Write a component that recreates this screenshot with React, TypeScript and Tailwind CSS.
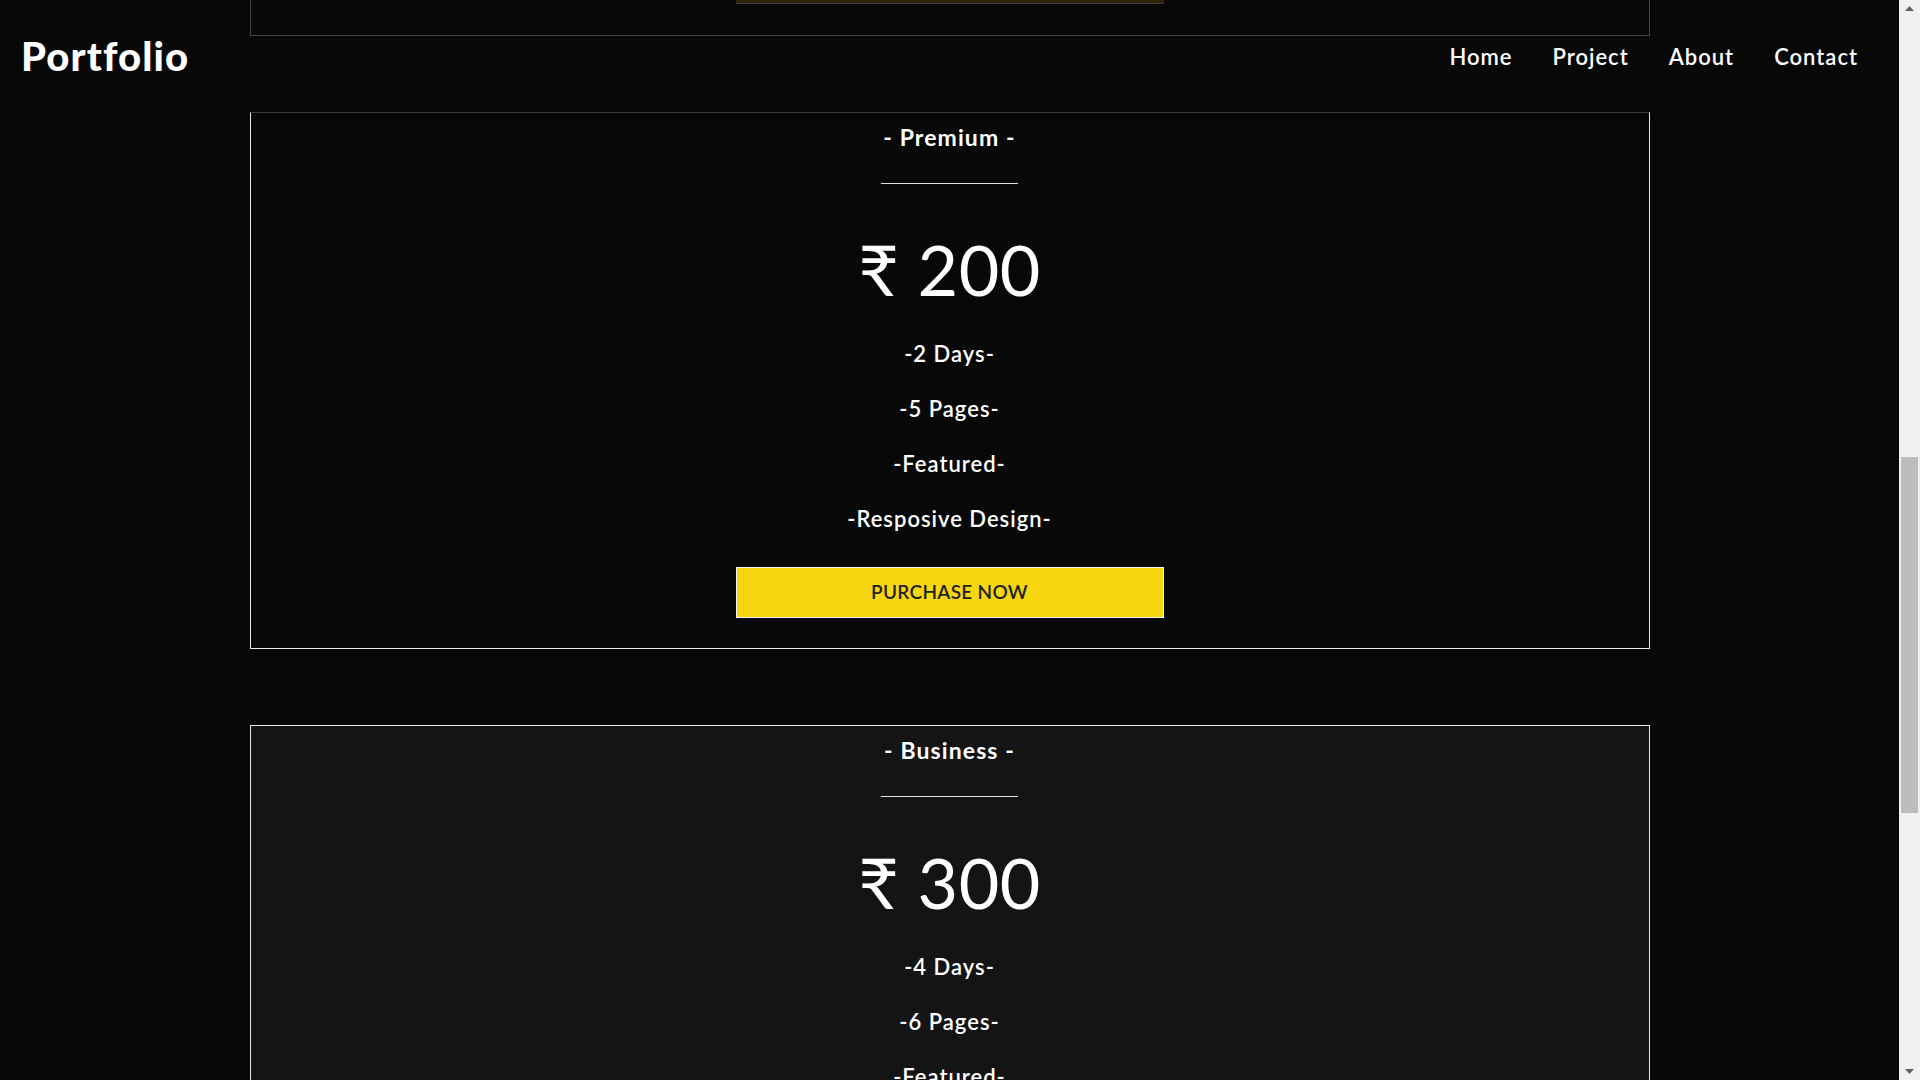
import React from "react";

type Plan = {
  name: string;
  price: string;
  items: string[];
  bg: string;
  topBorder: string;
};

const plans: Plan[] = [
  {
    name: "Premium",
    price: "200",
    items: ["-2 Days-", "-5 Pages-", "-Featured-", "-Resposive Design-"],
    bg: "bg-[#080808]",
    topBorder: "border-t-[#3a3a3a]",
  },
  {
    name: "Business",
    price: "300",
    items: ["-4 Days-", "-6 Pages-", "-Featured-", "-Resposive Design-"],
    bg: "bg-[#141414]",
    topBorder: "border-t-[#e8e8e8]",
  },
];

function Card({ plan }: { plan: Plan }) {
  return (
    <div
      className={`w-[1400px] shrink-0 border border-[#e8e8e8] ${plan.topBorder} ${plan.bg} flex flex-col items-center pt-[9px] pb-[30px] text-white`}
    >
      <div className="h-[30px] leading-[30px] text-[23px] font-bold tracking-[1.1px]">- {plan.name} -</div>
      <div className="mt-[31px] w-[137px] h-[1px] bg-[#e0e0e0]" />
      <div className="mt-[50px] h-[70px] leading-[70px] text-[70px] font-normal tracking-[0.5px]">
        ₹ {plan.price}
      </div>
      <div className="mt-[22px] flex flex-col items-center">
        {plan.items.map((it) => (
          <div key={it} className="h-[55px] leading-[55px] text-[22px] font-semibold tracking-[1px]">
            {it}
          </div>
        ))}
      </div>
      <button className="mt-[21px] w-[428px] h-[51px] bg-[#f6d70f] border border-[#f4f4f4] text-[#222] text-[19px] font-semibold tracking-[0.3px]">
        PURCHASE NOW
      </button>
    </div>
  );
}

export default function App() {
  return (
    <div className="relative h-[1080px] w-[1920px] overflow-hidden bg-[#080808] flex font-['Lato',sans-serif]">
      <div className="relative flex-1 flex flex-col items-center gap-[76px]">
        {/* previous card remnant */}
        <div className="w-[1400px] h-[36px] shrink-0 border-x border-b border-[#444] flex justify-center">
          <div className="w-[428px] h-[4px] bg-[#2c2508] border-b border-[#3a3a3a]" />
        </div>
        {plans.map((p) => (
          <Card key={p.name} plan={p} />
        ))}

        {/* fixed header overlay */}
        <header className="absolute top-0 left-0 right-0 h-[112px] flex items-center justify-between pl-[21px] pr-[41px] text-white">
          <div className="text-[40px] font-black tracking-[1.1px]">Portfolio</div>
          <nav className="flex items-center gap-[40px] text-[22px] font-semibold tracking-[1px]">
            <span>Home</span>
            <span>Project</span>
            <span>About</span>
            <span>Contact</span>
          </nav>
        </header>
      </div>

      {/* scrollbar */}
      <div className="w-[21px] h-full bg-[#f0f0f0] flex flex-col items-center">
        <div className="h-[17px] w-full flex items-center justify-center">
          <svg width="9" height="5" viewBox="0 0 9 5">
            <path d="M0 5 L4.5 0 L9 5 Z" fill="#606060" />
          </svg>
        </div>
        <div className="flex-1 w-full flex flex-col items-center">
          <div className="h-[440px] shrink-0" />
          <div className="w-[17px] h-[356px] bg-[#bdbdbd]" />
        </div>
        <div className="h-[17px] w-full flex items-center justify-center">
          <svg width="9" height="5" viewBox="0 0 9 5">
            <path d="M0 0 L4.5 5 L9 0 Z" fill="#606060" />
          </svg>
        </div>
      </div>
    </div>
  );
}
